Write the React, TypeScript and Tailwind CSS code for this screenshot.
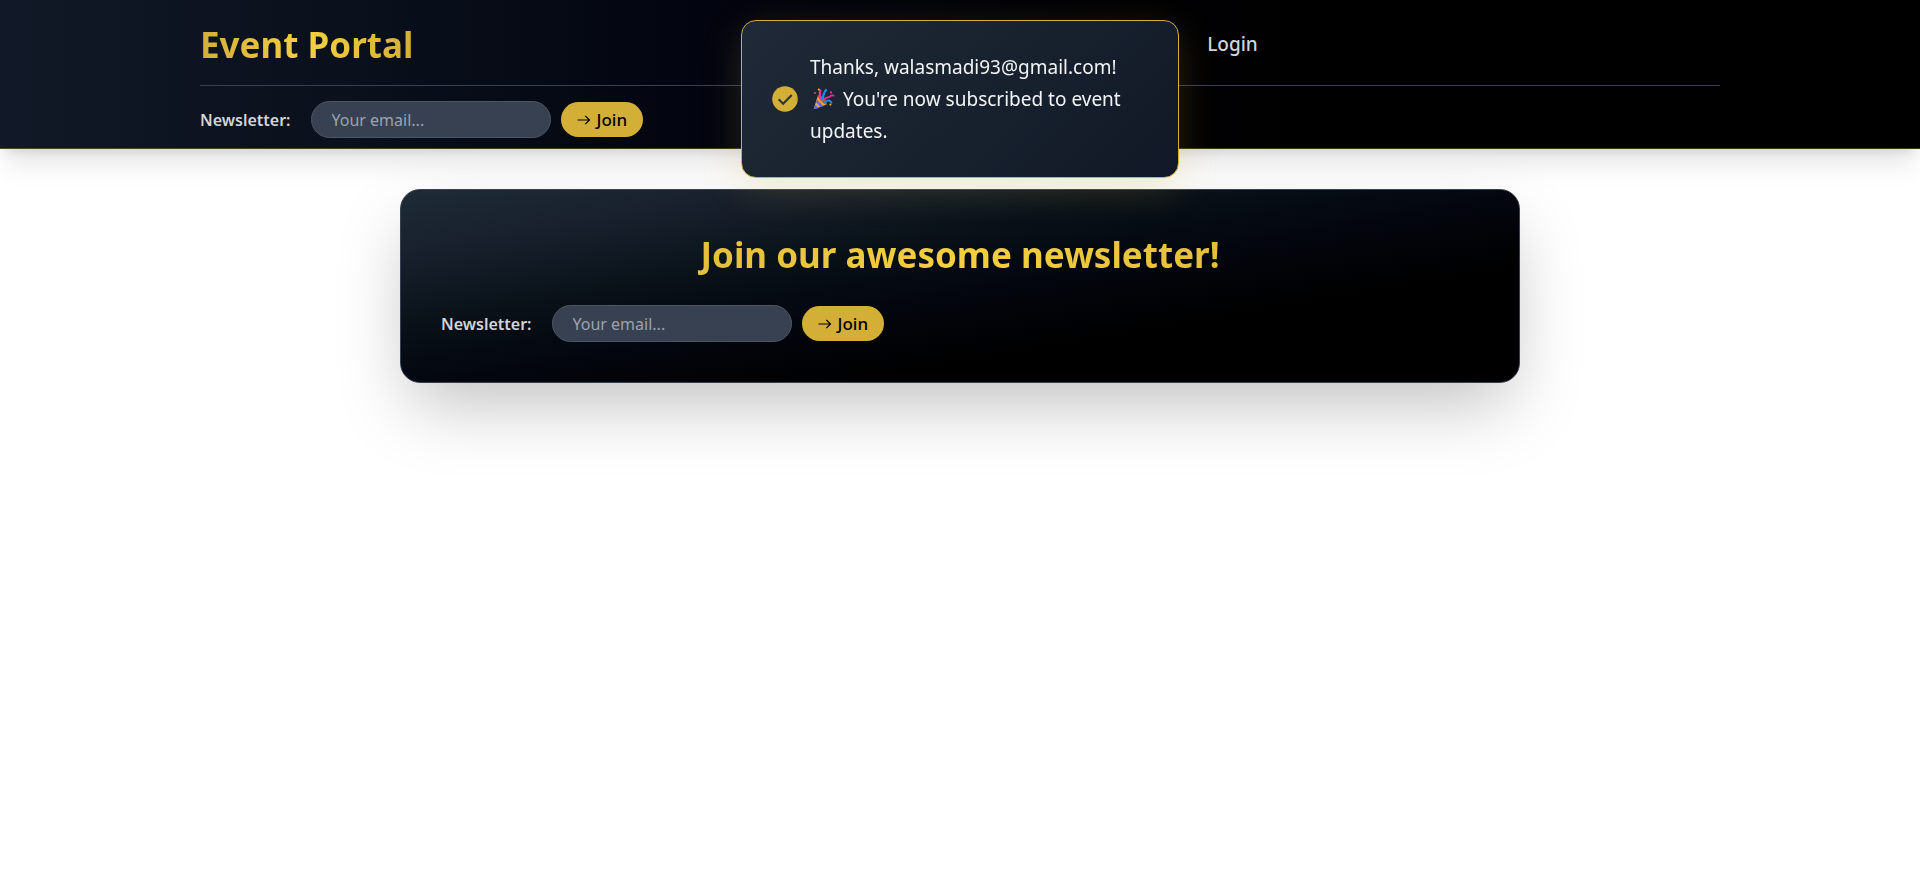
import { useId } from "react";

function ArrowIcon() {
  return (
    <svg viewBox="0 0 14 14" className="h-[14px] w-[14px]" fill="none" stroke="currentColor" strokeWidth="1.2" aria-hidden="true">
      <path d="M0.5 7H12.5M8.3 2.8L12.5 7L8.3 11.2" />
    </svg>
  );
}

function CheckIcon() {
  return (
    <svg viewBox="0 0 24 24" className="h-[26px] w-[26px] shrink-0" aria-hidden="true">
      <circle cx="12" cy="12" r="11.8" fill="#d4af37" />
      <path d="M6.2 12.2L10.3 16.3L18.2 8.4" fill="none" stroke="#2b3440" strokeWidth="2" />
    </svg>
  );
}

function PartyPopper() {
  return (
    <svg viewBox="0 0 22 22" className="mr-2 ml-[3px] inline-block h-[22px] w-[22px] align-[-4px]" role="img" aria-label="Party popper">
      <path d="M5 7.5C8.5 8 13 12.5 13.6 16.4L2 21C1 21.2 0.6 20.8 0.9 20Z" fill="#f9a13a" />
      <path d="M4 11.5L10.5 18L7.5 19.1L3 14.3ZM2.2 16.4L5.6 19.9L2 21C1 21.2 0.6 20.8 0.9 20Z" fill="#5b6fe0" />
      <path d="M5 7.5C8 6.5 14.5 13 13.6 16.4C11 17 4.5 10.5 5 7.5Z" fill="#c8572e" />
      <path d="M8.6 11C6.5 8 6.4 5 7.4 2.5" fill="none" stroke="#f0309b" strokeWidth="2.2" strokeLinecap="round" />
      <path d="M10 11.5C10 7.5 10.5 5 13 2" fill="none" stroke="#1c8ee6" strokeWidth="2.2" strokeLinecap="round" />
      <path d="M12 11C13.5 8.2 15.8 10.2 17 8.5C18 7.1 19 7.2 20.5 7.6" fill="none" stroke="#f0309b" strokeWidth="1.8" strokeLinecap="round" />
      <path d="M12 14C15 11.5 17 12.5 18.5 14.5" fill="none" stroke="#1c8ee6" strokeWidth="2" strokeLinecap="round" />
      <circle cx="2" cy="5" r="1.1" fill="#f0309b" />
      <circle cx="5.8" cy="1.6" r="1" fill="#f9c23a" />
      <circle cx="18" cy="4.4" r="1.1" fill="#f0309b" />
      <circle cx="17.4" cy="16.6" r="1.1" fill="#f9a13a" />
    </svg>
  );
}

function NewsletterForm() {
  const id = useId();
  return (
    <form className="flex items-center" onSubmit={(e) => e.preventDefault()}>
      <label htmlFor={id} className="mr-5 text-base font-semibold text-[#d1d5db]">
        Newsletter:
      </label>
      <input
        id={id}
        type="email"
        placeholder="Your email..."
        className="mr-[10px] h-[37px] w-60 rounded-[20px] border border-[#4b5563] bg-[#374151] px-5 text-base text-white outline-none placeholder:text-[#9ca3af]"
      />
      <button type="submit" className="flex h-[35px] items-center gap-[6px] rounded-[20px] bg-[#d4af37] px-4 text-[17px] font-medium text-black">
        <ArrowIcon />
        Join
      </button>
    </form>
  );
}

export default function App() {
  return (
    <div className="min-h-screen bg-white font-['Noto_Sans',sans-serif]">
      <header className="border-b border-[#d4af37]/30 bg-[linear-gradient(90deg,#111827,#0a111c_18%,#02040f_37%,#000_68%)] px-[200px] pb-[10px] shadow-xl">
        <div className="grid h-[86px] grid-cols-[66%_1fr] items-center gap-1 border-b border-[#374151] pt-1">
          <h1 className="w-fit bg-[linear-gradient(90deg,#d4af37,#f4d03f,#d4af37)] bg-clip-text text-[35px] leading-10 font-bold text-transparent">
            Event Portal
          </h1>
          <nav>
            <a href="#login" className="text-[19px] font-medium text-[#d1d5db]">
              Login
            </a>
          </nav>
        </div>
        <div className="pt-[15px]">
          <NewsletterForm />
        </div>
      </header>

      <main className="mx-auto mt-10 max-w-[1120px] rounded-[20px] border border-[#374151] bg-[linear-gradient(to_bottom_right,#1f2b38,#161e2a_20%,#091119_35%,#03060e_52%,#000_70%)] p-10 shadow-[0_30px_70px_-10px_rgba(0,0,0,0.25)]">
        <h2 className="mb-[25px] bg-[linear-gradient(90deg,#d4af37,#f4d03f,#d4af37)] bg-clip-text text-center text-[35px] leading-[50px] font-bold text-transparent">
          Join our awesome newsletter!
        </h2>
        <NewsletterForm />
      </main>

      <div
        role="status"
        className="fixed top-5 left-1/2 flex w-[438px] -translate-x-1/2 items-center gap-3 rounded-[15px] border border-[#d4af37] bg-[linear-gradient(135deg,#1f2937,#18222f_50%,#111827)] p-[30px] text-[19px] leading-8 text-[#f3f4f6] shadow-[0_10px_40px_rgba(212,175,55,0.2)]"
      >
        <CheckIcon />
        <p>
          Thanks, walasmadi93@gmail.com! <PartyPopper />
          You're now subscribed to event updates.
        </p>
      </div>
    </div>
  );
}
